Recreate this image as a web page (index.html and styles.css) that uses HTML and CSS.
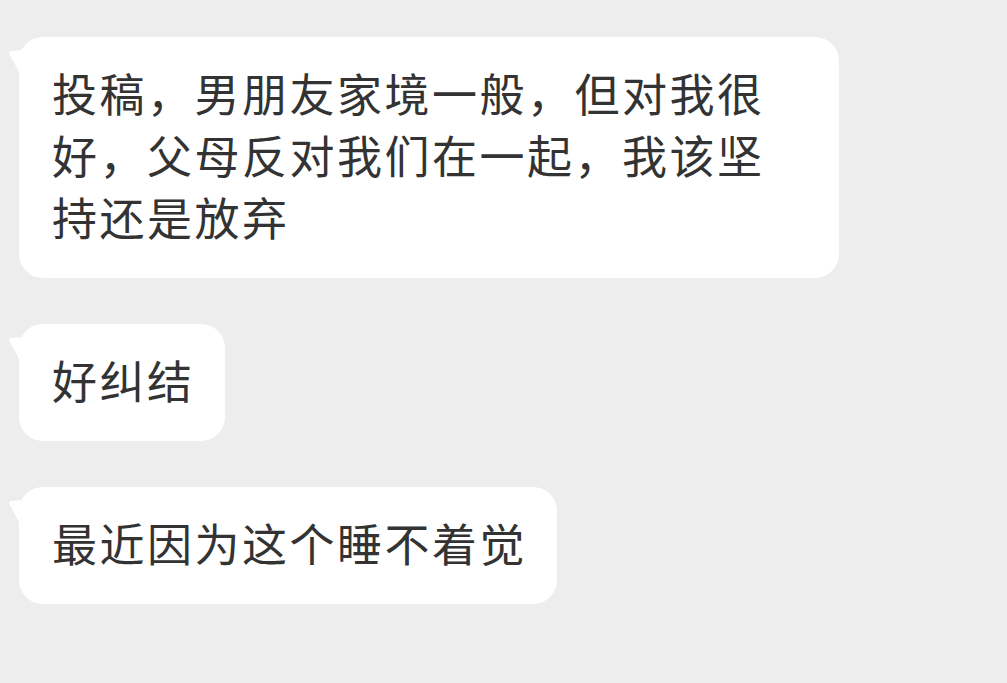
FILE: index.html
```html
<!DOCTYPE html>
<html lang="zh-CN">
<head>
<meta charset="utf-8">
<title>聊天</title>
<link rel="stylesheet" href="styles.css">
</head>
<body>
<div class="chat">
  <div class="msg">
    <svg class="tail" width="16" height="28" viewBox="0 0 16 28"><path d="M16 0 L3.5 1 Q0 1.5 1.6 4.5 Q7 14 13 26 L16 26 Z" fill="#ffffff"/></svg>
    <div class="bubble">投稿，男朋友家境一般，但对我很好，父母反对我们在一起，我该坚持还是放弃</div>
  </div>
  <div class="msg">
    <svg class="tail" width="16" height="28" viewBox="0 0 16 28"><path d="M16 0 L3.5 1 Q0 1.5 1.6 4.5 Q7 14 13 26 L16 26 Z" fill="#ffffff"/></svg>
    <div class="bubble">好纠结</div>
  </div>
  <div class="msg">
    <svg class="tail" width="16" height="28" viewBox="0 0 16 28"><path d="M16 0 L3.5 1 Q0 1.5 1.6 4.5 Q7 14 13 26 L16 26 Z" fill="#ffffff"/></svg>
    <div class="bubble">最近因为这个睡不着觉</div>
  </div>
</div>
</body>
</html>
```
FILE: styles.css
```css
html, body {
  margin: 0;
  padding: 0;
  background: #ededed;
  width: 1007px;
  height: 683px;
  overflow: hidden;
}

.chat {
  display: flex;
  flex-direction: column;
  align-items: flex-start;
  gap: 46px;
  padding: 37px 0 0 19px;
}

.msg {
  position: relative;
  max-width: 820px;
}

.tail {
  position: absolute;
  left: -11px;
  top: 13px;
  display: block;
}

.bubble {
  position: relative;
  box-sizing: border-box;
  max-width: 820px;
  background: #ffffff;
  border-radius: 24px;
  padding: 25px 30px 30px 33px;
  font-family: "Noto Sans CJK SC", "Noto Sans", sans-serif;
  font-size: 45px;
  letter-spacing: 2.5px;
  line-height: 62px;
  color: #333333;
}
```
